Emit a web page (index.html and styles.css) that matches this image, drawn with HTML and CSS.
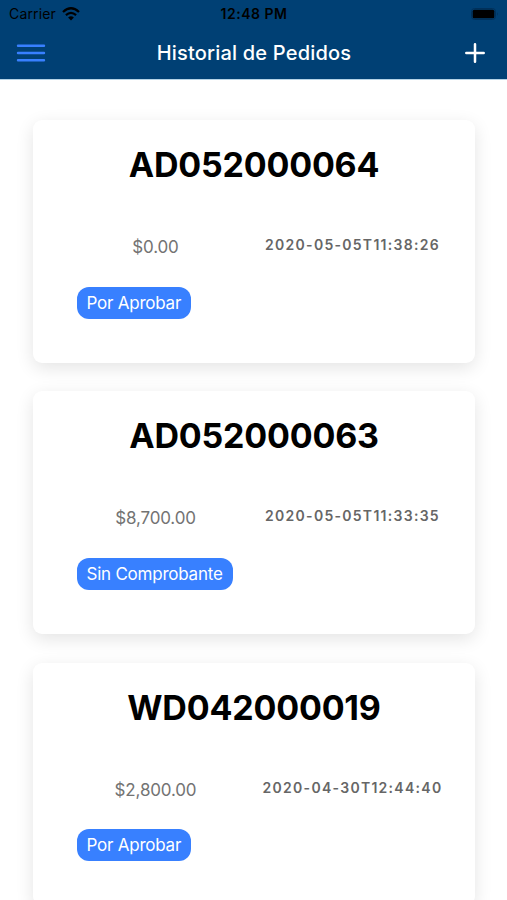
FILE: index.html
```
<!DOCTYPE html>
<html lang="es">
<head>
    <meta charset="UTF-8">
    <meta name="viewport" content="width=device-width, initial-scale=1.0">
    <title>Historial de Pedidos</title>
    <link rel="stylesheet" href="styles.css">
</head>
<body>
    <header class="header">
        <!-- Barra de estado -->
        <div class="status-bar">
            <div class="carrier">
                <span class="carrier-name">Carrier</span>
                <svg class="wifi" viewBox="0 0 18 14" width="18" height="14">
                    <path d="M1 5 Q9 -2.4 17 5" fill="none" stroke="#000" stroke-width="2.3"/>
                    <path d="M3.9 8.1 Q9 3.6 14.1 8.1" fill="none" stroke="#000" stroke-width="2.2"/>
                    <path d="M6.1 10.4 Q9 7.9 11.9 10.4 L9 13.6 Z" fill="#000"/>
                </svg>
            </div>
            <span class="clock">12:48 PM</span>
            <svg class="battery" viewBox="0 0 28 12" width="28" height="12">
                <rect x="0.5" y="0.5" width="24" height="11" rx="3" fill="none" stroke="#00305a"/>
                <rect x="1.7" y="1.7" width="21.6" height="8.6" rx="1.5" fill="#000"/>
                <path d="M26 4 Q27.6 6 26 8 Z" fill="#00305a"/>
            </svg>
        </div>

        <!-- Barra de navegación -->
        <div class="nav-bar">
            <svg class="menu-icon" viewBox="0 0 30 20" width="30" height="20">
                <path d="M2 2.8H28M2 10H28M2 17.2H28" stroke="#3880ff" stroke-width="2.4" stroke-linecap="round"/>
            </svg>
            <h1 class="nav-title">Historial de Pedidos</h1>
            <svg class="add-icon" viewBox="0 0 20 20" width="20" height="20">
                <path d="M10 1.3V18.7M1.3 10H18.7" stroke="#fff" stroke-width="2.5" stroke-linecap="round"/>
            </svg>
        </div>
    </header>

    <!-- Lista de pedidos -->
    <main class="orders">
        <article class="card">
            <h2 class="order-id">AD052000064</h2>
            <div class="order-info">
                <span class="amount">$0.00</span>
                <span class="date">2020-05-05T11:38:26</span>
            </div>
            <span class="badge">Por Aprobar</span>
        </article>
        <article class="card">
            <h2 class="order-id">AD052000063</h2>
            <div class="order-info">
                <span class="amount">$8,700.00</span>
                <span class="date">2020-05-05T11:33:35</span>
            </div>
            <span class="badge">Sin Comprobante</span>
        </article>
        <article class="card">
            <h2 class="order-id">WD042000019</h2>
            <div class="order-info">
                <span class="amount">$2,800.00</span>
                <span class="date">2020-04-30T12:44:40</span>
            </div>
            <span class="badge">Por Aprobar</span>
        </article>
    </main>
</body>
</html>
```
FILE: styles.css
```
* {
    box-sizing: border-box;
}

body {
    margin: 0;
    height: 900px;
    overflow: hidden;
    background: #fff;
    font-family: Inter, "Liberation Sans", sans-serif;
}

/* Cabecera */
.header {
    height: 80px;
    background: #004074;
    border-bottom: 1px solid #b4d3e6;
}

.status-bar {
    display: grid;
    grid-template-columns: 1fr auto 1fr;
    align-items: center;
    height: 27px;
    padding: 0 8px 0 9px;
    color: #000;
}

.carrier {
    display: flex;
    align-items: center;
    gap: 6px;
}

.carrier-name {
    font-size: 14px;
    letter-spacing: 0.15px;
}

.clock {
    font-size: 14px;
    font-weight: 600;
    letter-spacing: 0.5px;
}

.battery {
    justify-self: end;
}

.nav-bar {
    display: grid;
    grid-template-columns: 30px 1fr 30px;
    align-items: center;
    height: 51px;
    padding: 0 22px 0 16px;
}

.nav-title {
    margin: 0;
    padding-left: 7px;
    color: #fff;
    font-size: 20px;
    font-weight: 500;
    letter-spacing: 0.2px;
    text-align: center;
}

.add-icon {
    justify-self: end;
}

/* Tarjetas */
.orders {
    display: flex;
    flex-direction: column;
    gap: 28.8px;
    padding: 40px 32px 0 33px;
}

.card {
    flex: none;
    height: 242.5px;
    padding: 24px;
    border-radius: 9px;
    background: #fff;
    box-shadow: 0 5px 18px rgba(0, 0, 0, 0.11);
}

.order-id {
    margin: 0;
    color: #000;
    font-size: 34px;
    font-weight: 700;
    letter-spacing: -0.2px;
    line-height: 42px;
    text-align: center;
}

.order-info {
    display: grid;
    grid-template-columns: 1fr 1fr;
    margin-top: 49px;
    color: #737373;
    line-height: 24px;
    text-align: center;
}

.amount {
    font-size: 17px;
    letter-spacing: -0.15px;
}

.date {
    margin-top: -2px;
    font-size: 14px;
    font-weight: 600;
    letter-spacing: 1.28px;
    color: #666;
    white-space: nowrap;
}

.badge {
    display: inline-block;
    height: 32px;
    margin: 27.8px 0 0 20px;
    padding: 0 10px 0 9.5px;
    border-radius: 12px;
    background: #3880ff;
    color: #fff;
    font-size: 17px;
    letter-spacing: -0.23px;
    line-height: 32px;
}
```
